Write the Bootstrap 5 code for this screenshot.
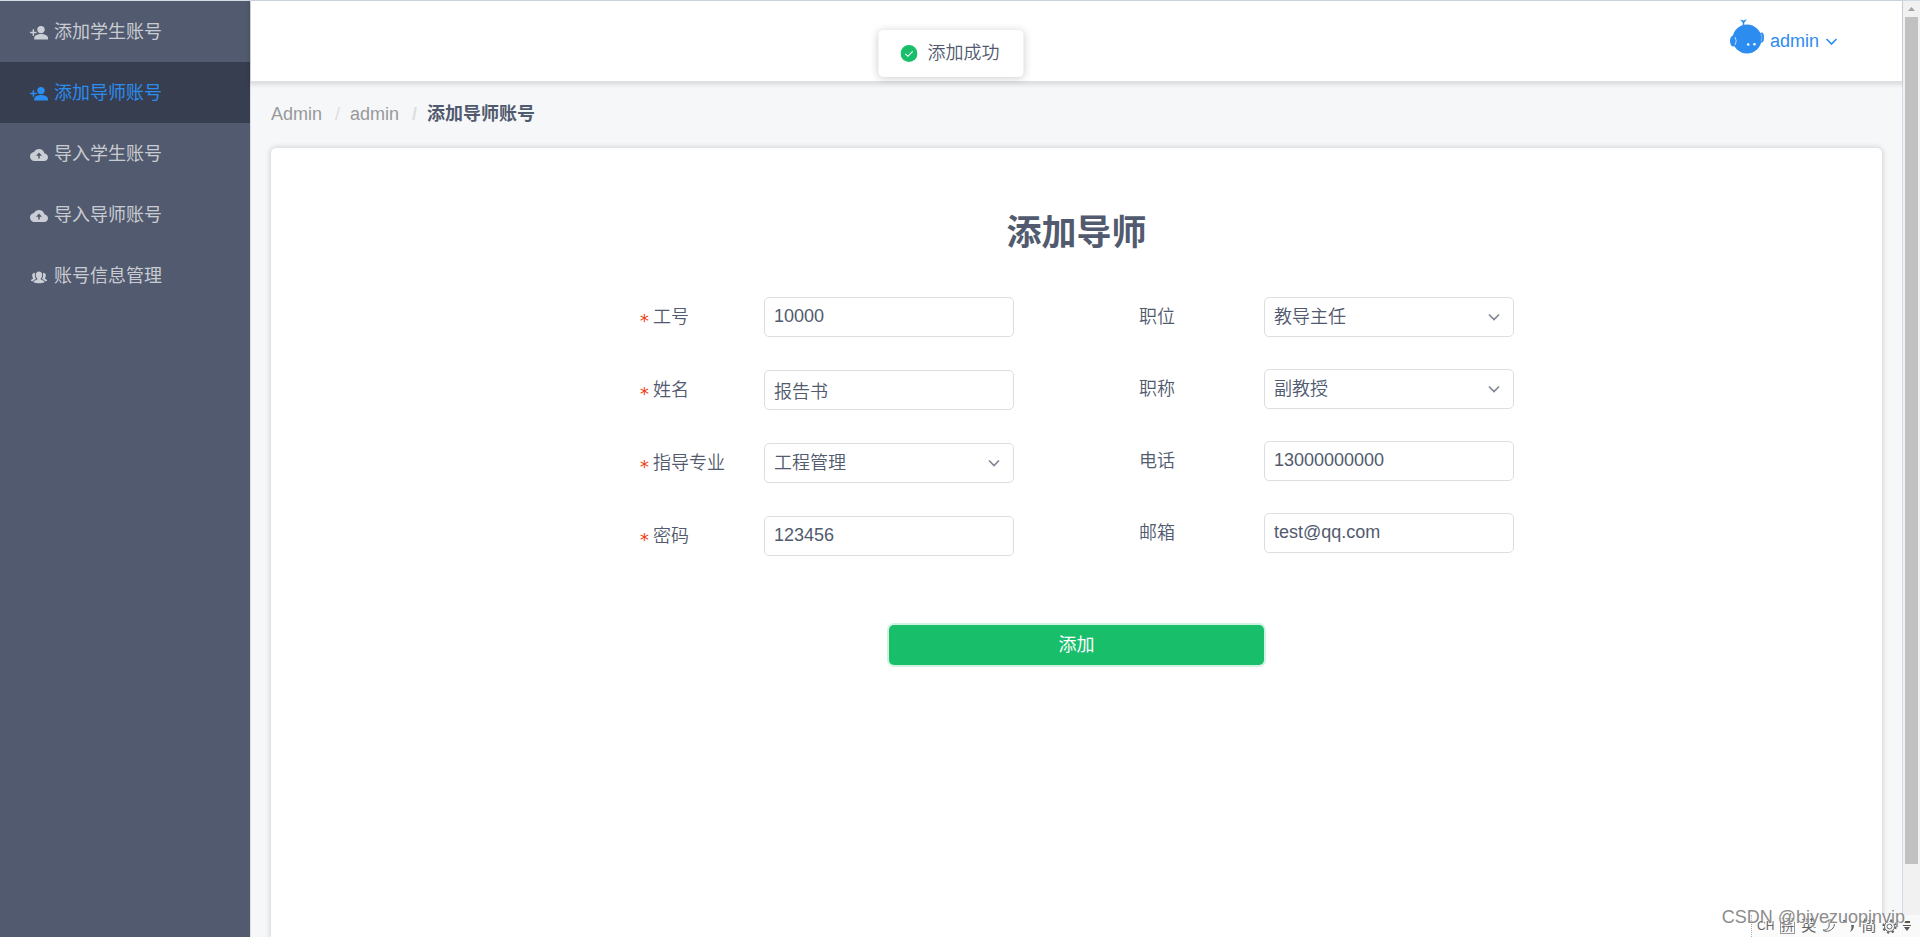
<!DOCTYPE html>
<html lang="zh-CN">
<head>
<meta charset="utf-8">
<meta name="viewport" content="width=device-width, initial-scale=1">
<title>添加导师账号</title>
<link href="https://cdn.jsdelivr.net/npm/bootstrap@5.3.0/dist/css/bootstrap.min.css" rel="stylesheet">
<style>
  :root { --ink: #515a6e; --brand: #2d8cf0; --ok: #19be6b; --line: #dcdee2; }
  body { font-family: "Liberation Sans", "Noto Sans CJK SC", sans-serif; font-size: 18px; font-weight: 350; line-height: 27px; color: var(--ink); background: #f5f7f9; }
  .shell { border-top: 1px solid #d3dce6; }
  .side { width: 250px; background: #515a6e; font-weight: 400; }
  .side a { height: 61px; padding: 2px 30px 0; gap: 6px; color: rgba(255,255,255,.7); text-decoration: none; }
  .side a.active { background: #363e4f; color: var(--brand); }
  .side svg { width: 18px; height: 18px; fill: currentColor; }
  .page-area { min-width: 0; border-left: 1px solid #dcdee2; border-right: 1px solid #d3dce6; }
  .topbar { height: 80px; padding-right: 64px; background: #fff; box-shadow: 0 2px 4px 2px rgba(0,0,0,.1); }
  .user-link { color: var(--brand); text-decoration: none; gap: 6px; }
  .crumbs { --bs-breadcrumb-divider-color: #dcdee2; padding: 20px 20px 0; height: 67px; }
  .crumbs a { color: #999; text-decoration: none; }
  .crumbs .breadcrumb-item + .breadcrumb-item { padding-left: 13px; }
  .crumbs .breadcrumb-item + .breadcrumb-item::before { padding-right: 10px; }
  .sheet { margin: 0 20px; padding-top: 60px; border: 0; border-radius: 5px 5px 0 0; box-shadow: 0 0 5px 1px rgba(0,0,0,.15); }
  .sheet h1 { font-size: 35px; line-height: 50px; margin-bottom: 39px; color: var(--ink); }
  .pair { column-gap: 125px; }
  .pair > div { width: 375px; display: grid; align-content: start; }
  .pair .req { row-gap: 33px; }
  .pair .opt { row-gap: 32px; }
  .field label { width: 125px; }
  .req label::before { content: "*"; display: inline-block; width: 14px; color: #ed4014; font-family: "DejaVu Sans Mono"; font-size: 18px; line-height: 18px; vertical-align: -4px; }
  .field .form-control, .field .form-select { width: 250px; height: 40px; padding: 0 9px 1px; font-size: 18px; font-weight: 350; line-height: 26px; color: var(--ink); border-color: var(--line); border-radius: 5px; }
  .field .form-select { background-image: url("data:image/svg+xml,%3Csvg xmlns='http://www.w3.org/2000/svg' viewBox='0 0 12 12'%3E%3Cpath fill='none' stroke='%23808695' stroke-width='1.700' d='M1 3.500l5 5 5-5'/%3E%3C/svg%3E"); background-size: 12px; background-position: right 13px center; }
  .btn-ok { width: 375px; height: 40px; margin-top: 69px; padding: 0; font-size: 18px; color: #fff; background: var(--ok); border: 0; border-radius: 5px; box-shadow: 0 0 0 2px rgba(25,190,107,.2); }
  .notice { top: 29px; left: calc(50% - 9px); transform: translateX(-50%); height: 47px; padding: 0 24px 0 22px; gap: 10px; background: #fff; border-radius: 5px; box-shadow: 0 1px 8px rgba(0,0,0,.2); white-space: nowrap; }
  .rail { width: 17px; background: #f1f1f1; padding: 0 2px; }
  .rail svg { height: 16px; width: 13px; }
  .rail .thumb { height: 847px; background: #c1c1c1; }
  .ime { right: 0; bottom: 0; height: 22px; width: 169px; padding-left: 5px; border-left: 1px dotted #aaa; background: rgba(250,250,250,.85); color: #666; font-size: 15px; font-weight: 400; line-height: 22px; gap: 6px; }
  .ime .boxed { border: 1px solid #999; font-size: 13px; line-height: 14px; }
  .ime .lang { font-size: 12px; }
  .wm { right: 15px; bottom: 7px; font-size: 18px; line-height: 26px; color: #8c8c8c; text-shadow: 1px 1px 0 #fff; }
</style>
</head>
<body>
<svg class="d-none">
  <symbol id="i-add" viewBox="0 0 18 18"><circle cx="11" cy="5.600" r="3.700"/><path d="M4.200 15.500v-1.700c0-2.500 4-3.800 6.900-3.800s6.900 1.300 6.900 3.800v1.700zM2.600 5.300h1.500v2.500h2.500v1.500H4.100v2.500H2.600V9.300H.1V7.800h2.500z"/></symbol>
  <symbol id="i-cloud" viewBox="0 0 24 24"><path fill-rule="evenodd" d="M19.350 10.040C18.670 6.590 15.640 4 12 4 9.110 4 6.600 5.640 5.350 8.040 2.340 8.360 0 10.910 0 14c0 3.310 2.690 6 6 6h13c2.760 0 5-2.240 5-5 0-2.640-2.050-4.780-4.650-4.960zM13 13v3.500h-2V13H8l4-4.500 4 4.500z"/></symbol>
  <symbol id="i-group" viewBox="0 0 18 18"><path d="M9 3.500c2 0 3.200 1.500 3.200 3.300 0 1.600-.6 2.900-1.400 3.600v1.100c1.500.7 3.400.9 3.700 2.700-1.500.8-3.500 1-5.500 1s-4-.2-5.500-1c.3-1.800 2.200-2 3.700-2.700v-1.100c-.8-.7-1.400-2-1.400-3.600C5.800 5 7 3.500 9 3.500z"/><path d="M4.700 4.800c-1.600 0-2.500 1.200-2.500 2.600 0 1.100.4 2.100 1 2.700-.1 1.200-2.200 1-2.400 2.600 1 .5 1.800.5 2.400.5.500-1.300 1.800-1.500 2.900-2.100C5.300 10 4.700 8.400 5 6.500zM13.300 4.800c1.600 0 2.500 1.200 2.500 2.600 0 1.100-.4 2.100-1 2.700.1 1.200 2.200 1 2.400 2.600-1 .5-1.800.5-2.400.5-.5-1.300-1.800-1.500-2.900-2.100.8-1.100 1.400-2.700 1.100-4.600z"/></symbol>
</svg>

<div class="shell d-flex min-vh-100 position-relative">
  <nav class="side flex-shrink-0">
    <a href="#" class="d-flex align-items-center"><svg><use href="#i-add"/></svg>添加学生账号</a>
    <a href="#" class="d-flex align-items-center active"><svg><use href="#i-add"/></svg>添加导师账号</a>
    <a href="#" class="d-flex align-items-center"><svg><use href="#i-cloud"/></svg>导入学生账号</a>
    <a href="#" class="d-flex align-items-center"><svg><use href="#i-cloud"/></svg>导入导师账号</a>
    <a href="#" class="d-flex align-items-center"><svg><use href="#i-group"/></svg>账号信息管理</a>
  </nav>

  <div class="page-area flex-grow-1 d-flex flex-column">
    <header class="topbar d-flex justify-content-end align-items-center">
      <a href="#" class="user-link d-flex align-items-center">
        <svg width="34" height="36" viewBox="0 0 34 36" class="mb-2">
          <g fill="#2d8cf0"><circle cx="17" cy="20" r="14.500"/><ellipse cx="3.200" cy="22" rx="3.200" ry="5.500"/><ellipse cx="31.500" cy="18.500" rx="2.500" ry="5"/><path d="M10 .5l3.500 1L17 .3 14.200 3.800V8h-1.400V3.800z"/></g>
          <path d="M5 18q2.500 4 0 8" fill="none" stroke="#b9d9fa"/><path d="M31 14.500q1.500 4 0 8" fill="none" stroke="#8fc3f8" stroke-width=".8"/>
          <circle cx="18.200" cy="25.500" r="1.300" fill="#fff"/><circle cx="24.500" cy="25.200" r="1.300" fill="#fff"/>
        </svg>
        <span>admin</span>
        <svg width="13" height="13" viewBox="0 0 13 13"><path d="M1.500 4l5 5 5-5" fill="none" stroke="#2d8cf0" stroke-width="1.600"/></svg>
      </a>
    </header>

    <ol class="breadcrumb crumbs mb-0">
      <li class="breadcrumb-item"><a href="#">Admin</a></li>
      <li class="breadcrumb-item"><a href="#">admin</a></li>
      <li class="breadcrumb-item fw-bold">添加导师账号</li>
    </ol>

    <main class="card sheet flex-grow-1">
      <form class="d-flex flex-column align-items-center">
        <h1 class="fw-bold">添加导师</h1>
        <div class="pair d-flex flex-wrap justify-content-center">
          <div class="req">
            <div class="field d-flex align-items-center"><label for="no">工号</label><input id="no" type="text" class="form-control" value="10000"></div>
            <div class="field d-flex align-items-center"><label for="name">姓名</label><input id="name" type="text" class="form-control" value="报告书"></div>
            <div class="field d-flex align-items-center"><label for="major">指导专业</label><select id="major" class="form-select"><option>工程管理</option></select></div>
            <div class="field d-flex align-items-center"><label for="pass">密码</label><input id="pass" type="text" class="form-control" value="123456"></div>
          </div>
          <div class="opt">
            <div class="field d-flex align-items-center"><label for="post">职位</label><select id="post" class="form-select"><option>教导主任</option></select></div>
            <div class="field d-flex align-items-center"><label for="rank">职称</label><select id="rank" class="form-select"><option>副教授</option></select></div>
            <div class="field d-flex align-items-center"><label for="tel">电话</label><input id="tel" type="tel" class="form-control" value="13000000000"></div>
            <div class="field d-flex align-items-center"><label for="mail">邮箱</label><input id="mail" type="email" class="form-control" value="test@qq.com"></div>
          </div>
        </div>
        <button type="button" class="btn btn-ok">添加</button>
      </form>
    </main>
  </div>

  <div class="rail flex-shrink-0 d-flex flex-column">
    <svg viewBox="0 0 13 16" class="flex-shrink-0"><path d="M3 10l3.500-4 3.500 4z" fill="#a3a3a3"/></svg>
    <div class="thumb"></div>
  </div>

  <div class="notice position-absolute d-flex align-items-center" role="status">
    <svg width="17" height="17" viewBox="0 0 17 17"><circle cx="8.500" cy="8.500" r="8.500" fill="#19be6b"/><path d="M4.800 8.800l2.600 2.500 4.800-5" fill="none" stroke="#fff" stroke-width="1.100"/></svg>
    <span>添加成功</span>
  </div>

  <div class="ime position-absolute d-flex align-items-center">
    <span class="lang">CH</span><span class="boxed">拼</span><span>英</span>
    <svg width="14" height="16" viewBox="0 0 14 16"><path d="M6 2c6-1 8 4 5 8s-8 4-10 2c5 1 8-4 5-10z" fill="none" stroke="#666"/></svg>
    <svg width="13" height="16" viewBox="0 0 13 16" fill="#666"><path d="M1 2h3l-1 4H2zM9 7h3c0 4-2 6-4 7 1-2 2-4 1-7z"/></svg>
    <span>简</span>
    <svg width="15" height="15" viewBox="0 0 15 15" fill="none" stroke="#666"><circle cx="7.500" cy="7.500" r="2.500"/><circle cx="7.500" cy="7.500" r="5"/><circle cx="7.500" cy="7.500" r="6.200" stroke-width="2" stroke-dasharray="2.400 2.470"/></svg>
    <svg width="8" height="12" viewBox="0 0 8 12" fill="#555"><path d="M1 1h6v2H1zM0 5h8v1H0zM1 7h6l-3 4z"/></svg>
  </div>
  <div class="wm position-absolute">CSDN @biyezuopinvip</div>
</div>
<script src="https://cdn.jsdelivr.net/npm/bootstrap@5.3.0/dist/js/bootstrap.bundle.min.js"></script>
</body>
</html>
